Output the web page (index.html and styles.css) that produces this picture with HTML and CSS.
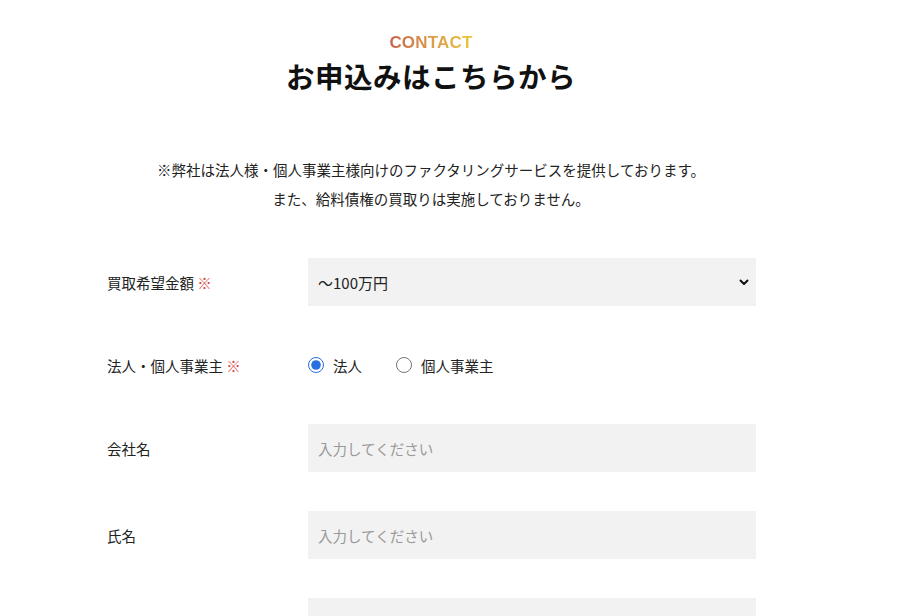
FILE: index.html
```html
<!DOCTYPE html>
<html lang="ja">
<head>
<meta charset="utf-8">
<title>お申込みはこちらから</title>
<link rel="stylesheet" href="styles.css">
</head>
<body>
<div class="page">
  <header class="head">
    <p class="eyebrow">CONTACT</p>
    <h1 class="title">お申込みはこちらから</h1>
  </header>
  <p class="note">※弊社は法人様・個人事業主様向けのファクタリングサービスを提供しております。<br>また、給料債権の買取りは実施しておりません。</p>
  <form class="form">
    <div class="row">
      <label class="label">買取希望金額 <span class="req">※</span></label>
      <div class="field select-wrap">
        <select class="control select">
          <option>～100万円</option>
          <option>100万円～500万円</option>
          <option>500万円～</option>
        </select>
        <svg class="chev" width="10" height="7" viewBox="0 0 10 7"><path d="M1.5 1.5 L5 5 L8.5 1.5" fill="none" stroke="#111" stroke-width="2" stroke-linecap="round" stroke-linejoin="round"/></svg>
      </div>
    </div>
    <div class="row row-radio">
      <span class="label">法人・個人事業主 <span class="req">※</span></span>
      <div class="field radios">
        <label class="radio"><input type="radio" name="type" checked> 法人</label>
        <label class="radio"><input type="radio" name="type"> 個人事業主</label>
      </div>
    </div>
    <div class="row">
      <label class="label">会社名</label>
      <div class="field"><input class="control" type="text" placeholder="入力してください"></div>
    </div>
    <div class="row">
      <label class="label">氏名</label>
      <div class="field"><input class="control" type="text" placeholder="入力してください"></div>
    </div>
    <div class="row">
      <label class="label"></label>
      <div class="field"><input class="control" type="text"></div>
    </div>
  </form>
</div>
</body>
</html>
```
FILE: styles.css
```css
* { box-sizing: border-box; }
html, body { margin: 0; padding: 0; background: #fff; }
body {
  font-family: "Noto Sans CJK JP", "Noto Sans", sans-serif;
  color: #222;
  overflow: hidden;
}
.page {
  width: 862px;
}
.head {
  text-align: center;
  padding-top: 29px;
}
.eyebrow {
  margin: 0;
  font-family: "Liberation Sans", Arial, sans-serif;
  font-weight: bold;
  font-size: 17px;
  line-height: 20px;
  letter-spacing: 0.2px;
  background: linear-gradient(90deg, #c8604c 0%, #dc9a48 50%, #e8c63e 100%);
  -webkit-background-clip: text;
  background-clip: text;
  color: transparent;
  display: inline-block;
}
.title {
  margin: 3px 0 0;
  font-size: 28.5px;
  line-height: 40px;
  font-weight: bold;
  color: #111;
  letter-spacing: 0.5px;
}
.note {
  margin: 59px 0 0;
  text-align: center;
  font-size: 14.5px;
  line-height: 29px;
  color: #222;
}
.form {
  margin: 45px 0 0 107px;
  width: 649px;
  display: flex;
  flex-direction: column;
  gap: 39px;
}
.row {
  display: flex;
  align-items: center;
  min-height: 48px;
}
.row-radio { min-height: 40px; }
.label {
  width: 201px;
  flex: none;
  font-size: 14.5px;
  color: #222;
}
.req { color: #d84848; }
.field {
  flex: 1;
  position: relative;
}
.control {
  display: block;
  width: 100%;
  height: 48px;
  border: none;
  border-radius: 0;
  background: #f2f2f2;
  padding: 0 10px;
  font-family: "Noto Sans CJK JP", "Noto Sans", sans-serif;
  font-size: 14.5px;
  color: #222;
  outline: none;
}
.control::placeholder { color: #999; }
.select {
  appearance: none;
  -webkit-appearance: none;
  font-size: 15px;
}
.chev {
  position: absolute;
  right: 7px;
  top: 21px;
  pointer-events: none;
}
.radios {
  display: flex;
  align-items: center;
  gap: 34px;
}
.radio {
  display: flex;
  align-items: center;
  gap: 9px;
  font-size: 14.5px;
  color: #222;
}
.radio input {
  margin: 0;
  width: 16px;
  height: 16px;
  accent-color: #2a6fe0;
}
```
